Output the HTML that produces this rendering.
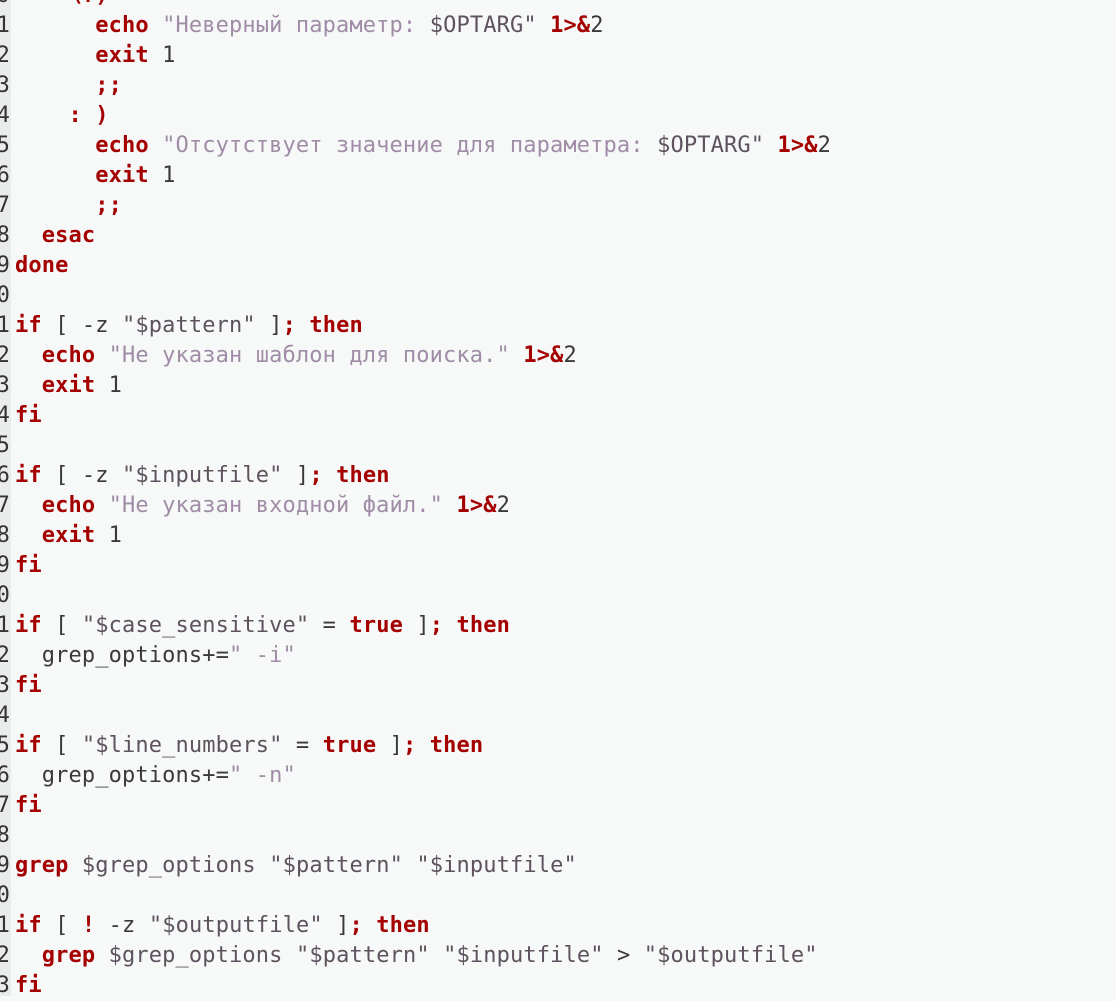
<!DOCTYPE html>
<html><head><meta charset="utf-8"><style>
html,body{margin:0;padding:0;width:1116px;height:996px;overflow:hidden;background:#f6f9f8;}
.g{position:absolute;left:0;top:0;width:11px;height:996px;background:#e9ecea;overflow:hidden;}
.code,.nums{position:absolute;top:-19px;font-family:"DejaVu Sans Mono","Liberation Mono",monospace;font-size:22px;line-height:30px;letter-spacing:0.13px;white-space:pre;color:#3a3a3a;}
.code{left:15px;}
.nums{right:1px;text-align:right;color:#333;}
.k{color:#a40000;font-weight:bold;}
.s{color:#a08ca6;}
.v{color:#5e525e;}
</style></head><body>
<div class="g"><div class="nums">0
1
2
3
4
5
6
7
8
9
0
1
2
3
4
5
6
7
8
9
0
1
2
3
4
5
6
7
8
9
0
1
2
3
4</div></div>
<div class="code"><span class="k">    \?)</span>
      <span class="k">echo</span> <span class="s">"Неверный параметр: </span><span class="v">$OPTARG"</span> <span class="k">1>&amp;</span>2
      <span class="k">exit</span> 1
      <span class="k">;;</span>
    <span class="k">: )</span>
      <span class="k">echo</span> <span class="s">"Отсутствует значение для параметра: </span><span class="v">$OPTARG"</span> <span class="k">1>&amp;</span>2
      <span class="k">exit</span> 1
      <span class="k">;;</span>
  <span class="k">esac</span>
<span class="k">done</span>

<span class="k">if</span> [ -z <span class="v">"$pattern"</span> ]<span class="k">; then</span>
  <span class="k">echo</span> <span class="s">"Не указан шаблон для поиска."</span> <span class="k">1>&amp;</span>2
  <span class="k">exit</span> 1
<span class="k">fi</span>

<span class="k">if</span> [ -z <span class="v">"$inputfile"</span> ]<span class="k">; then</span>
  <span class="k">echo</span> <span class="s">"Не указан входной файл."</span> <span class="k">1>&amp;</span>2
  <span class="k">exit</span> 1
<span class="k">fi</span>

<span class="k">if</span> [ <span class="v">"$case_sensitive"</span> = <span class="k">true</span> ]<span class="k">; then</span>
  grep_options+=<span class="s">" -i"</span>
<span class="k">fi</span>

<span class="k">if</span> [ <span class="v">"$line_numbers"</span> = <span class="k">true</span> ]<span class="k">; then</span>
  grep_options+=<span class="s">" -n"</span>
<span class="k">fi</span>

<span class="k">grep</span> <span class="v">$grep_options</span> <span class="v">"$pattern"</span> <span class="v">"$inputfile"</span>

<span class="k">if</span> [ <span class="k">!</span> -z <span class="v">"$outputfile"</span> ]<span class="k">; then</span>
  <span class="k">grep</span> <span class="v">$grep_options</span> <span class="v">"$pattern"</span> <span class="v">"$inputfile"</span> &gt; <span class="v">"$outputfile"</span>
<span class="k">fi</span></div>
</body></html>
